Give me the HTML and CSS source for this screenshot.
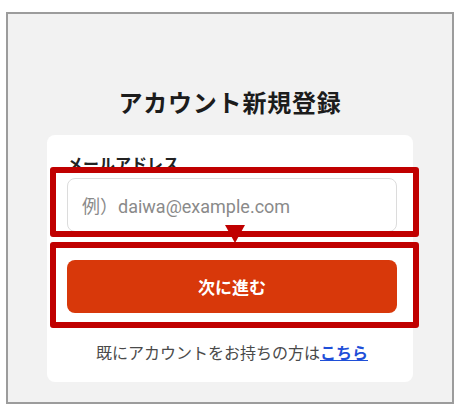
FILE: index.html
```html
<!DOCTYPE html>
<html lang="ja">
<head>
<meta charset="utf-8">
<link rel="stylesheet" href="styles.css">
</head>
<body>
<div class="frame">
  <h1 class="title">アカウント新規登録</h1>
  <div class="card">
    <div class="label">メールアドレス</div>
    <div class="input">例）daiwa@example.com</div>
    <div class="button">次に進む</div>
    <p class="footer">既にアカウントをお持ちの方は<a class="link">こちら</a></p>
    <div class="mark mark-input"></div>
    <div class="mark mark-button"></div>
    <div class="arrow"></div>
  </div>
</div>
</body>
</html>
```
FILE: styles.css
```css
html, body {
  margin: 0;
  padding: 0;
  background: #ffffff;
}
body {
  font-family: "Noto Sans CJK JP", "Noto Sans", sans-serif;
}
.frame {
  box-sizing: border-box;
  margin: 12px 0 0 6px;
  width: 448px;
  height: 392px;
  border: 2px solid #9c9c9c;
  background: #f2f2f2;
  padding: 72px 39px 0;
}
.title {
  margin: 0;
  font-size: 24px;
  line-height: 32px;
  font-weight: 700;
  text-align: center;
  color: #1c1c1c;
  letter-spacing: 0.8px;
}
.card {
  position: relative;
  margin-top: 17px;
  background: #ffffff;
  border-radius: 8px;
  padding: 18px 16px 18px 20px;
}
.label {
  font-size: 16px;
  line-height: 20px;
  font-weight: 700;
  color: #222;
}
.input {
  box-sizing: border-box;
  margin-top: 5px;
  height: 54px;
  border: 1px solid #dcdcdc;
  border-radius: 8px;
  display: flex;
  align-items: center;
  padding-left: 14px;
  font-family: Roboto, "Noto Sans CJK JP", sans-serif;
  font-size: 18px;
  color: #8a8a8a;
}
.button {
  margin-top: 28px;
  height: 53px;
  border-radius: 8px;
  background: #d8380a;
  color: #ffffff;
  font-size: 17px;
  font-weight: 700;
  display: flex;
  align-items: center;
  justify-content: center;
}
.footer {
  margin: 27px 0 0;
  font-size: 16px;
  line-height: 24px;
  text-align: center;
  color: #4a4a4a;
}
.link {
  color: #1f4fd8;
  font-weight: 700;
  text-decoration: underline;
}
.mark {
  position: absolute;
  box-sizing: border-box;
  border: 6px solid #c00000;
  border-radius: 3px;
  left: 3px;
  width: 369px;
}
.mark-input {
  top: 32px;
  height: 70px;
}
.mark-button {
  top: 107px;
  height: 86px;
}
.arrow {
  position: absolute;
  left: 178px;
  top: 90px;
  width: 0;
  height: 0;
  border-left: 10px solid transparent;
  border-right: 10px solid transparent;
  border-top: 18px solid #c00000;
}
```
